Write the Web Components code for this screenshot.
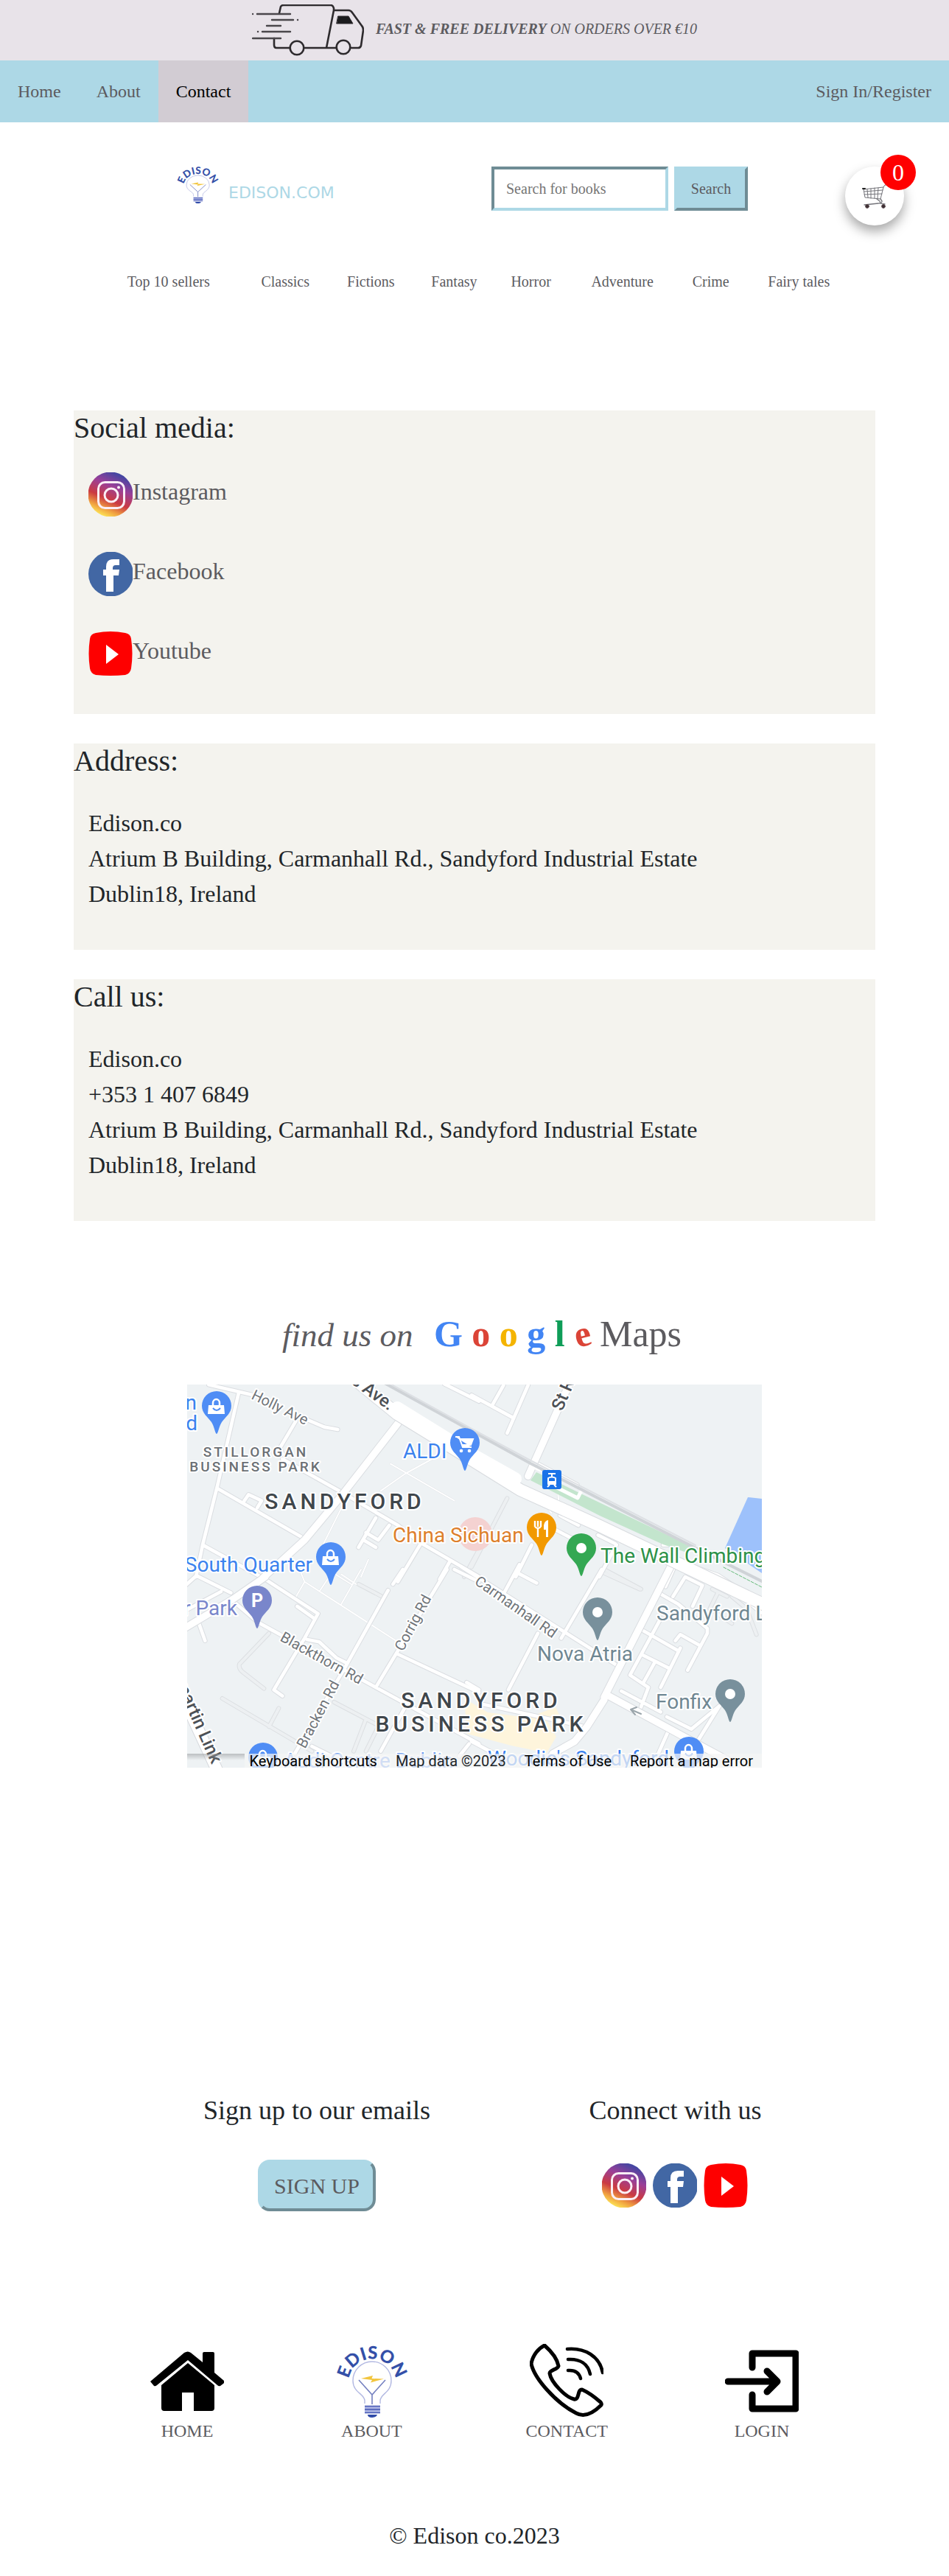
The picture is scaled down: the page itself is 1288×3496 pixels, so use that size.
<!DOCTYPE html>
<html lang="en">
<head>
<meta charset="utf-8">
<title>Edison - Contact</title>
<style>
:root{--ink:#212529;--link:#5c5b5f;--sky:#add8e6;--lilac:#e8e3e9;--paper:#f4f3ee}
body{margin:0;background:#fff;color:var(--ink);font-family:"Liberation Serif","Times New Roman",serif;font-size:32px;line-height:48px}
main{display:block}
.cards{display:flex;flex-direction:column;gap:40px;padding:160px 100px 0}
.socials{list-style:none;margin:0;padding:0;display:flex;flex-direction:column;gap:48px}
.socials a{display:block;height:60px;color:var(--link);text-decoration:none}
.socials social-icon{vertical-align:middle}
p{margin:0}
</style>
</head>
<body>
<promo-bar><b>FAST &amp; FREE DELIVERY</b> ON ORDERS OVER €10</promo-bar>
<site-nav></site-nav>
<site-header></site-header>
<category-nav></category-nav>
<main>
  <div class="cards">
    <info-card heading="Social media:">
      <ul class="socials">
        <li><a href="#instagram"><social-icon name="instagram"></social-icon>Instagram</a></li>
        <li><a href="#facebook"><social-icon name="facebook"></social-icon>Facebook</a></li>
        <li><a href="#youtube"><social-icon name="youtube"></social-icon>Youtube</a></li>
      </ul>
    </info-card>
    <info-card heading="Address:">
      <p>Edison.co</p><p>Atrium B Building, Carmanhall Rd., Sandyford Industrial Estate</p><p>Dublin18, Ireland</p>
    </info-card>
    <info-card heading="Call us:">
      <p>Edison.co</p><p>+353 1 407 6849</p><p>Atrium B Building, Carmanhall Rd., Sandyford Industrial Estate</p><p>Dublin18, Ireland</p>
    </info-card>
  </div>
  <map-section></map-section>
</main>
<site-footer></site-footer>
<script>
const define = (name, render) => customElements.define(name, class extends HTMLElement {
  constructor() {
    super();
    this.attachShadow({ mode: 'open' });
  }
  connectedCallback() {
    this.shadowRoot.innerHTML = render(this);
  }
});

define('promo-bar', () => `
<style>
:host{display:block;background:var(--lilac);color:var(--link);text-align:center;font-size:20px;line-height:30px;font-style:italic;padding:6px 0}
div{height:70px}
svg{width:152px;height:70px;vertical-align:middle;margin-right:16px}
</style>
<div><svg viewBox="0 0 152 70" fill="none" stroke="#2e2b2e" stroke-width="2.6" stroke-linecap="round" stroke-linejoin="round" aria-hidden="true">
<path d="M37 12L39 3Q40 1 43 1H107Q110 1 111 5V8H131Q134 8 136 11L149 29Q151 31 151 35L148 56Q147 59 144 59H134M114 59H71M51 59H33Q30 59 30 55V46M111 8L101 59"/>
<circle cx="61" cy="59" r="9.3"/><circle cx="124" cy="58" r="9.3"/>
<path d="M117 16H131L137 26H115Z" fill="#1c1c1e" stroke-width="1"/>
<path d="M7 13H52M27 21H56M62 21h.1M20 29H39M14 37H52M8 37h.1M1 46H39M1 13h.1" stroke-width="2.4" stroke="#4a474b"/>
</svg><slot></slot></div>`);

define('site-nav', () => `
<style>
:host{display:block;background:var(--sky)}
nav{display:flex;font-size:24px;line-height:36px}
a{padding:24px;color:var(--link);text-decoration:none}
a.on{background:#d2ccd3;color:#000}
a.end{margin-left:auto}
</style>
<nav><a href="#home">Home</a><a href="#about">About</a><a class="on" href="#contact" aria-current="page">Contact</a><a class="end" href="#login">Sign In/Register</a></nav>`);

define('edison-bulb', el => {
  const w = Number(el.getAttribute('span') || 100), k = w / 100;
  return `
<style>:host{display:inline-block}svg{display:block;width:100%;height:100%;overflow:visible}
text{font:900 ${w > 100 ? 27 : 24}px Lato,sans-serif;fill:#3450a8}</style>
<svg viewBox="0 0 ${w} 100" role="img" aria-label="Edison">
<path id="arc" fill="none" d="M${20.5 * k} 62A${32 * k} 32 0 1 1 ${81.5 * k} 62"/>
<text text-anchor="middle"><textPath href="#arc" startOffset="50%">EDISON</textPath></text>
<g transform="scale(${k} 1)" fill="none">
<path d="M41 81V77C41 68 25 66 25 50A26 26 0 0 1 77 50C77 66 62 68 62 77V81" stroke="#b3b9e2" stroke-width="1.4"/>
<path d="M33 49L51 69L69 49M51 69V82" stroke="#7480c0" stroke-width="1.6"/>
<path d="M36 47L52 43L50.500 47L67 47.500L49 52.500L51 49Z" fill="#f2c53d"/>
<path d="M41 84H62V93H41Z" fill="#aab2e2"/>
<path d="M41 84.500H62M41 89H62M41 93.500H62" stroke="#4457b4" stroke-width="1.600"/>
<path d="M45 96H58Q57 100 51 100T45 96Z" fill="#2f4aa8"/>
</g></svg>`;
});

define('site-header', () => `
<style>
:host{display:block}
header{display:flex;align-items:flex-start;padding:60px 61px 0 238px}
.logo{display:flex;align-items:flex-end;gap:12px;text-decoration:none;color:var(--sky);font:22px/22px "DejaVu Sans",sans-serif}
edison-bulb{width:60px;height:50px}
.logo span{padding-bottom:3px}
form{display:flex;gap:8px;margin:0 132px 0 auto}
input,button{box-sizing:border-box;height:60px;font:20px/30px "Liberation Serif",serif;border:4px solid var(--sky);border-radius:0;margin:0;outline:0}
input{width:240px;padding:0 16px;background:#fff;border-color:#6f8c95 var(--sky) var(--sky) #6f8c95}
input::placeholder{color:#757575}
button{width:100px;padding:0;background:var(--sky);color:var(--link);border-color:var(--sky) #6f8c95 #6f8c95 var(--sky)}
.cart{position:relative;display:grid;place-items:center;width:80px;height:80px;border-radius:50%;background:#fff;box-shadow:0 8px 16px rgba(0,0,0,.35)}
.cart svg{width:34px;height:34px}
.badge{position:absolute;right:-16px;top:-16px;width:48px;height:48px;border-radius:50%;background:red;color:#fff;font-size:32px;line-height:48px;text-align:center}
</style>
<header>
<a class="logo" href="#home"><edison-bulb span="120"></edison-bulb><span>EDISON.COM</span></a>
<form role="search" onsubmit="return false"><input type="search" aria-label="Search for books" placeholder="Search for books"><button>Search</button></form>
<a class="cart" href="#cart" aria-label="Shopping cart"><svg viewBox="0 0 34 34" fill="none" stroke="#74747a" stroke-width="1" stroke-linecap="round">
<path d="M2 8L29 5M2 8L4 19L25 21L29 5L31 2H33M3 11L28 9M3 15L27 14M7 8L8 19M12 7V20M17 6V20M22 6L21 20"/><path d="M20 21L24 24Q26 27 22 27L3 29M25 21Q29 25 25 27L31 28" stroke-width="1.300"/>
<circle cx="7" cy="31" r="2.400" fill="#3c2f33" stroke="#5a484d"/><circle cx="29" cy="31" r="2.400" fill="#3c2f33" stroke="#5a484d"/><path d="M1 7H4" stroke="#222" stroke-width="2"/>
</svg><span class="badge">0</span></a>
</header>`);

define('category-nav', () => `
<style>
:host{display:block;padding-top:61px;font-size:20px;line-height:30px}
ul{display:table;width:80%;margin:0 auto;padding:0;list-style:none}
li{display:table-cell;text-align:center;white-space:nowrap}
a{color:var(--link);text-decoration:none}
</style>
<nav aria-label="Categories"><ul>${['Top 10 sellers', 'Classics', 'Fictions', 'Fantasy', 'Horror', 'Adventure', 'Crime', 'Fairy tales'].map(t => `<li><a href="#books">${t}</a></li>`).join('')}</ul></nav>`);

define('social-icon', el => {
  const art = {
    instagram: `<defs><linearGradient id="g" x1=".25" y1="1" x2=".7" y2="0"><stop offset=".02" stop-color="#fff05a"/><stop offset=".2" stop-color="#f0a040"/><stop offset=".4" stop-color="#cb3a42"/><stop offset=".68" stop-color="#9a3f98"/><stop offset=".95" stop-color="#4346a2"/></linearGradient></defs>
<circle cx="30" cy="30" r="30.500" fill="url(#g)"/><g fill="none" stroke="#fbeef5" stroke-width="3"><rect x="13.500" y="13.500" width="35" height="35" rx="9"/><circle cx="31" cy="31" r="9"/></g><circle cx="41" cy="20.500" r="2" fill="#fbeef5"/>`,
    facebook: `<circle cx="30.500" cy="30" r="30.500" fill="#4267a4"/><path d="M24 54V32H20V24H24V20Q24 10 34 10H42V18H37Q33 18 33 22V24H42L41 32H34V54Z" fill="#fff"/>`,
    youtube: `<path d="M10 2Q30-2 50 2Q57 3 58 10Q61 30 58 50Q57 57 50 59Q30 61 10 59Q3 57 2 50Q-1 30 2 10Q3 3 10 2Z" fill="#fe0000"/><path d="M24 18L41 31L24 44Z" fill="#fff"/>`
  };
  return `<style>:host{display:inline-block;width:60px;height:60px}svg{display:block;width:100%;height:100%}</style><svg viewBox="0 0 60 60" aria-hidden="true">${art[el.getAttribute('name')]}</svg>`;
});

define('info-card', el => `
<style>
:host{display:block;background:var(--paper)}
h2{margin:0;font-size:40px;line-height:48px;font-weight:400}
div{padding:36px 20px 52px}
</style>
<h2>${el.getAttribute('heading')}</h2><div><slot></slot></div>`);

/* Street geometry, in four quadrants drawn at three times the map scale. */
const quad = [['-4 -9'], ['386 -9'], ['-4 251'], ['386 251']];
const layer = paths => paths.map((d, i) => `<path transform="translate(${quad[i]}) scale(.33333)" d="${d}"/>`).join('');
const streets = {
  lane: [
    'M840 350L1100 500M1010 330L900 390L800 460M640 530L560 690M750 740L720 810',
    'M325 500L310 530L325 550M350 450L360 560M590 620L570 670',
    'M490 50L800 250L870 295M490 50L450 120M600 10L680 60M640 20L700 60M720 0L640 140M590 30L550 90M470 0L490 50',
    'M0 0'],
  grey: [
    'M1200 700L1140 810', 'M145 490L0 770M540 780L690 860',
    'M345 260L225 385Q220 400 235 415L325 485M155 525L520 740M385 565L345 640M610 540L800 640M740 610L690 740M790 640L740 740M710 60L805 110',
    'M530 10L685 80M980 80L1040 110M1060 110L1120 160L1160 265M1000 100L970 160L1060 220'],
  street: [
    'M100 28L280 70M500 170L570 200L625 210M222 60L135 440L75 680L48 810M455 175L390 285L400 310M400 330L640 465L870 600L960 670L1200 810M135 450L490 655M245 500L262 475L315 500L298 528M75 680L330 820M780 570L710 690M740 630L790 660L835 600M730 660L780 690M960 680L870 830M1080 750L1040 820M1060 25L1200 95',
    'M0 70L165 160M130 30L85 110M230 30L145 225M245 680L180 810M360 560L435 600M345 620L440 670M515 640L585 675M830 760L790 850M590 680L520 810M270 350L430 435M360 440L440 480L435 500M780 680H840',
    'M330 40L545 180L490 280L365 490L400 515M460 150L530 200M500 285L550 295L620 360L660 380M830 85L660 390L450 750M890 0L850 60M1070 0L780 480M870 345L1200 500M200 130L300 215L780 480L1200 710M0 70L50 25L190 95M0 170L150 90M60 220L85 290M1100 0L1200 50M520 720L600 760M900 560L800 740M1160 710L1120 760',
    'M-40 -10L600 395M180 10L265 55M195 -20L130 100M530 0L365 280M270 260L150 490M30 490L-20 460M0 700L130 770M820 110L870 30L940 65L900 150M770 100L840 140L960 240L960 260L880 410M700 250L840 330M770 200L645 430L720 480L690 560M850 320L770 480M830 290L850 265L930 310M700 350L800 400M745 380L700 460M610 495L770 580M795 600L895 650L1010 555L920 700M800 660L760 750M50 550L460 640'],
  avenue: [
    'M870 185L640 480L490 660L320 815', 'M400 20L230 400',
    'M330 30L200 120L0 240', 'M820 -30L540 520M550 510L900 700L1180 850M540 530L470 640L420 700L330 750M860 -20L1000 30L1090 90L1182 170']
};
const road = (kind, outer, inner, fill = '#fff', edge = '#dadde1') =>
  `<g stroke="${edge}" stroke-width="${outer}">${layer(streets[kind])}</g><g stroke="${fill}" stroke-width="${inner}">${layer(streets[kind])}</g>`;
const pin = (x, y, color, glyph = '<circle r="7" fill="#fff"/>') =>
  `<g transform="translate(${x} ${y})"><path d="M0 38C-2 38-3 28-7 22C-12 15-20 10-20 0A20 20 0 0 1 20 0C20 10 12 15 7 22C3 28 2 38 0 38Z" fill="${color}"/>${glyph}</g>`;
const bag = '<path d="M-11-1H10L11 11H-12Z" fill="#fff"/><path d="M-5-1V-4A4.500 5 0 0 1 4-4V-1" fill="none" stroke="#fff" stroke-width="2.500"/><path d="M-5 3Q0 9 5 3" fill="none" stroke="#4f8df5" stroke-width="2"/>';
const trolley = '<path d="M-13-8H-8L-3 6H9M-7-5H11L8 3H-4Z" fill="#fff" stroke="#fff" stroke-width="2"/><circle cx="-5" cy="11" r="2.300" fill="#fff"/><circle cx="6" cy="11" r="2.300" fill="#fff"/>';
const fork = '<path d="M-9-9V-1M-5-9V-1M-1-9V-1M-9-1Q-5 3-1-1M-5 0V13" fill="none" stroke="#fff" stroke-width="2.400"/><path d="M3-3Q4-9 9-10V13H6V3H3Z" fill="#fff"/>';

define('map-section', () => `
<style>
:host{display:block;padding-top:123px}
h1{margin:0 0 39px;padding-left:20px;text-align:center;font-weight:400;font-size:50px;line-height:60px;color:var(--link)}
em{font-size:45px;line-height:45px;margin-right:16px}
.tilt{display:inline-block;line-height:50px;transform:rotate(-14deg)}
figure{position:relative;margin:0 auto;width:100%;max-width:780px;overflow:hidden}
figure>svg{display:block;width:100%;height:auto;font-family:Roboto,sans-serif}
.poi{font-size:28px}
.area{font-weight:500;font-size:30px;letter-spacing:5px;fill:#3f464b}
.park{font-weight:500;font-size:19px;letter-spacing:3px;fill:#6b7075}
.st{font-size:20px;fill:#70757a}
.main{font-size:24px;font-weight:500;fill:#4d5156}
.legal{position:absolute;right:0;bottom:0;left:78px;display:flex;justify-content:flex-end;gap:25px;height:19px;padding-right:12px;background:rgba(245,245,245,.72);font:20px/20px Roboto,sans-serif;white-space:nowrap}
.legal button,.legal a{padding:0;border:0;background:none;font:inherit;color:#000;text-decoration:none}
</style>
<h1><em>find us on</em> <b><span style="color:#4285f4">G</span> <span style="color:#db4437">o</span> <span style="color:#f4b400">o</span> <span style="color:#4285f4">g</span> <span style="color:#0f9d58">l</span> <span class="tilt" style="color:#db4437">e</span></b> Maps</h1>
<figure>
<svg viewBox="0 0 780 520" role="img" aria-label="Map of Sandyford">
<defs><linearGradient id="fade" x1="0" y1="0" x2="0" y2="1"><stop stop-color="#9a9da0" stop-opacity=".6"/><stop offset="1" stop-color="#9a9da0" stop-opacity="0"/></linearGradient></defs>
<rect width="780" height="520" fill="#eef2f4"/>
<path d="M761 153L780 155V256L730 222Z" fill="#9dc1fb"/>
<path d="M376 426L408 445L462 452L500 438L505 448L486 452L501 478L488 500L440 490L380 474Z" fill="#fef5dc"/>
<g fill="none" stroke-linecap="round" stroke-linejoin="round">
${road('grey', 18, 12, '#edf0f2', '#dcdfe2')}
${road('lane', 8, 6)}${road('street', 20, 14)}${road('avenue', 34, 28)}
<path d="M-12 410L46 535" stroke="#d5d8dc" stroke-width="17"/><path d="M-12 410L46 535" stroke="#fff" stroke-width="15"/>
<path d="M225-9L285 40L386 102L452 143L560 192L790 302" stroke="#d8dbdf" stroke-width="18"/><path d="M225-9L285 40L386 102L452 143L560 192L790 302" stroke="#fff" stroke-width="16"/>
<path d="M285 32L390 97L445 128" stroke="#fff" stroke-width="18"/>
<path d="M474 119L530 146L689 222L678 228L646 217L560 178L466 130Z" fill="#c3e5cd" stroke="none"/>
<path d="M490 134L530 154L534 146M468 111L528 136" stroke="#fff" stroke-width="5"/>
<path d="M266-3L386 63L466 107L690 222L790 272" stroke="#cfd3d7" stroke-width="4"/><path d="M272-3L386 60L466 103L690 218" stroke="#dde0e4" stroke-width="2"/>
<path d="M728 248L780 275" stroke="#66bb7a" stroke-width="1" stroke-dasharray="4 2"/>
<path d="M602 441L616 447M602 441L610 438M602 441L608 448" stroke="#9aa5ab" stroke-width="2"/>
</g>
<circle cx="391" cy="203" r="23" fill="#f4d2d1"/>
${pin(40, 29, '#4f8df5', bag)}${pin(377, 79, '#4f8df5', trolley)}${pin(195, 234, '#4f8df5', bag)}${pin(681, 498, '#4f8df5', bag)}${pin(103, 506, '#4f8df5', bag)}
${pin(95, 293, '#7986cb', '<text text-anchor="middle" y="9" font-size="25" font-weight="700" fill="#fff">P</text>')}
${pin(481, 194, '#f29900', fork)}${pin(535, 222, '#34a853')}${pin(557, 309, '#78909c')}${pin(737, 420, '#78909c')}
<rect x="482" y="116" width="26" height="26" rx="3" fill="#1a73e8"/><path d="M490 121H500M495 121V125M490 127Q495 124 500 127V135H490ZM492 136L489 139M498 136L501 139" fill="none" stroke="#fff" stroke-width="2"/><path d="M490 131H500V136H490Z" fill="#fff"/>
<g stroke="#fff" stroke-width="4" stroke-linejoin="round" paint-order="stroke">
<g class="poi">
<g fill="#3b82ee"><text x="13" y="34" text-anchor="end">n</text><text x="14" y="62" text-anchor="end">d</text><text x="293" y="100">ALDI</text><text x="170" y="254" text-anchor="end">South Quarter</text><text x="131" y="520" fill="#6f9ff0">Audi Centre Dublin</text><text x="408" y="517">Woodie's Sandyford</text></g>
<text x="279" y="214" fill="#dd7f2c">China Sichuan</text><text x="561" y="242" fill="#2c9148">The Wall Climbing</text>
<text x="68" y="313" text-anchor="end" fill="#7986cb">r Park</text>
<g fill="#6f8792"><text x="475" y="375">Nova Atria</text><text x="637" y="320">Sandyford L</text><text x="636" y="440">Fonfix</text></g></g>
<g text-anchor="middle"><g class="park"><text x="93" y="98">STILLORGAN</text><text x="93" y="118">BUSINESS PARK</text></g>
<g class="area"><text x="214" y="169">SANDYFORD</text><text x="399" y="439">SANDYFORD</text><text x="399" y="471">BUSINESS PARK</text></g></g>
<g class="st"><text transform="translate(86 19) rotate(26)">Holly Ave</text><text transform="translate(125 347) rotate(29)">Blackthorn Rd</text><text transform="translate(160 495) rotate(-62)">Bracken Rd</text><text transform="translate(293 363) rotate(-62)">Corrig Rd</text><text transform="translate(389 270) rotate(35)">Carmanhall Rd</text></g>
<g class="main"><text transform="translate(274 36) rotate(36)" text-anchor="end">s Ave.</text><text transform="translate(509 37) rotate(-67)">St R</text><text transform="translate(-16 405) rotate(66)">martin Link</text></g>
</g>
<rect y="501" width="78" height="9" fill="url(#fade)"/>
</svg>
<div class="legal"><button>Keyboard shortcuts</button><span>Map data ©2023</span><a href="#terms">Terms of Use</a><a href="#report">Report a map error</a></div>
</figure>`);

define('site-footer', () => `
<style>
:host{display:block;padding-top:438px}
.row{display:table;margin:0 auto;table-layout:auto}
.row>*{display:table-cell;text-align:center;vertical-align:top}
.top{width:76%;font-size:36px;line-height:54px}
.wrap{padding-right:8px}
h3{margin:0 0 40px;font:inherit}
button{width:160px;height:70px;padding:0;border:4px solid var(--sky);border-color:var(--sky) #6f8c95 #6f8c95 var(--sky);border-radius:16px;background:var(--sky);color:var(--link);font:30px/45px "Liberation Serif",serif;display:block;margin:0 auto}
.icons{display:flex;justify-content:center;gap:9px;padding-top:5px}
.icons a{height:60px;line-height:0}
.links{width:80%;margin-top:180px;font-size:24px;line-height:36px}
.links a{color:var(--link);text-decoration:none}
.links svg,edison-bulb{display:block;width:100px;height:100px;margin:0 auto}
p{margin:100px 0 31px;text-align:center;line-height:48px}
</style>
<footer>
<div class="wrap"><div class="row top">
<section><h3>Sign up to our emails</h3><button>SIGN UP</button></section>
<section><h3>Connect with us</h3><div class="icons">${['instagram', 'facebook', 'youtube'].map(n => `<a href="#${n}" aria-label="${n}"><social-icon name="${n}"></social-icon></a>`).join('')}</div></section>
</div></div>
<nav class="row links">
<span><a href="#home"><svg viewBox="0 0 100 100"><path d="M0 51L46 12Q51 9 55 12L71 25V13Q71 11 73 11H85Q87 11 87 13V39L100 50Q101 52 99 54L95 57Q93 58 91 56L51 22L9 56Q7 58 5 57Z"/><path d="M15 56L51 26L87 56V87Q87 91 83 91H59V66H43V91H19Q15 91 15 87Z"/></svg>HOME</a></span>
<span><a href="#about"><edison-bulb></edison-bulb>ABOUT</a></span>
<span><a href="#contact"><svg viewBox="0 0 100 100" fill="none" stroke="#000" stroke-width="5" stroke-linecap="round" stroke-linejoin="round"><path d="M20 2C12 6 4 15 2 27C6 46 34 79 63 94C72 99 84 96 97 83Q98 81 96 79C88 72 80 66 71 62Q68 62 67 65C65 71 65 76 60 75C48 72 29 52 27 40C27 35 38 35 39 30C37 19 28 9 20 2Z"/><path d="M51 7C75 5 95 17 99 39M52 21C68 20 79 27 82 41M52 36Q66 35 69 47" stroke-width="4.500"/></svg>CONTACT</a></span>
<span><a href="#login"><svg viewBox="0 0 100 100" fill="none" stroke="#000" stroke-width="9" stroke-linecap="round" stroke-linejoin="round"><path d="M37 32V13H96V88H37V69M4 51H70M57 37L71 51L57 65"/></svg>LOGIN</a></span>
</nav>
<p>© Edison co.2023</p>
</footer>`);
</script>
</body>
</html>
